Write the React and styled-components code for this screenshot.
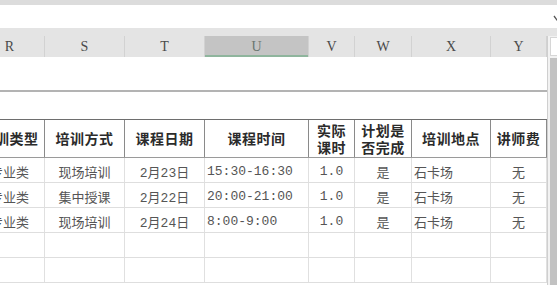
import React from 'react'
import styled, { createGlobalStyle } from 'styled-components'

const cols = '70px 80px 80px 104px 46px 57px 79px 56px'

const letters = ['R', 'S', 'T', 'U', 'V', 'W', 'X', 'Y']

const heads = [
  ['培训类型'],
  ['培训方式'],
  ['课程日期'],
  ['课程时间'],
  ['实际', '课时'],
  ['计划是', '否完成'],
  ['培训地点'],
  ['讲师费'],
]

const rows = [
  ['专业类', '现场培训', '2月23日', '15:30-16:30', '1.0', '是', '石卡场', '无'],
  ['专业类', '集中授课', '2月22日', '20:00-21:00', '1.0', '是', '石卡场', '无'],
  ['专业类', '现场培训', '2月24日', '8:00-9:00', '1.0', '是', '石卡场', '无'],
  ['', '', '', '', '', '', '', ''],
  ['', '', '', '', '', '', '', ''],
]

// columns whose text sits on the left
const leftCols = [3, 6]

const App = () => {
  return (
    <>
      <Global />
      <Window>
        <TopBand />
        <FormulaBar>
          <Chevron viewBox="0 0 8 6">
            <path d="M1 1 L4 5 L7 1" fill="none" stroke="#555" strokeWidth="1.3" />
          </Chevron>
        </FormulaBar>
        <Strip />
        <Main>
          <Sheet>
            <Grid>
              <LetterRow>
                {letters.map((l) => (
                  <Letter key={l} $active={l === 'U'}>{l}</Letter>
                ))}
              </LetterRow>
              <BlankRow $h={35} $freeze />
              <BlankRow $h={27} />
              <HeadRow>
                {heads.map((h, i) => (
                  <HeadCell key={i}>
                    {h.map((line) => (
                      <HeadLine key={line}>{line}</HeadLine>
                    ))}
                  </HeadCell>
                ))}
              </HeadRow>
              {rows.map((r, ri) => (
                <DataRow key={ri}>
                  {r.map((v, ci) => (
                    <DataCell key={ci} $left={leftCols.includes(ci)}>{v}</DataCell>
                  ))}
                </DataRow>
              ))}
            </Grid>
          </Sheet>
          <Scrollbar>
            <ScrollButton />
            <Thumb />
          </Scrollbar>
        </Main>
      </Window>
    </>
  )
}

export default App

const Global = createGlobalStyle`
  html, body {
    margin: 0;
    padding: 0;
    background: #fff;
  }
`

const Window = styled.div`
  width: 557px;
  height: 285px;
  overflow: hidden;
  display: flex;
  flex-direction: column;
  background: #fff;
  font-family: "Noto Sans CJK SC", sans-serif;
`

const TopBand = styled.div`
  height: 5px;
  background: #dcdcdc;
  flex-shrink: 0;
`

const FormulaBar = styled.div`
  height: 23px;
  flex-shrink: 0;
  background: #fff;
  display: flex;
  align-items: center;
  justify-content: flex-end;
`

const Chevron = styled.svg`
  width: 8px;
  height: 6px;
  margin-right: -4px;
  margin-top: 3px;
`

const Strip = styled.div`
  height: 8px;
  flex-shrink: 0;
  background: #e4e4e4;
`

const Main = styled.div`
  flex: 1;
  display: flex;
  min-height: 0;
`

const Sheet = styled.div`
  width: 547px;
  overflow: hidden;
`

const Grid = styled.div`
  margin-left: -25px;
  width: 572px;
`

const Row = styled.div`
  display: grid;
  grid-template-columns: ${cols};
`

const LetterRow = styled(Row)`
  height: 21px;
  background: #e4e4e4;
`

const Letter = styled.div`
  display: flex;
  align-items: center;
  justify-content: center;
  font-family: "Liberation Serif", serif;
  font-size: 14px;
  border-right: 1px solid #d2d2d2;
  background: ${(p) => (p.$active ? '#c4c4c4' : 'transparent')};
  box-shadow: ${(p) => (p.$active ? 'inset 0 -2px 0 #8fb59d' : 'none')};
  color: ${(p) => (p.$active ? '#6a7670' : '#4a4a4a')};
`

const BlankRow = styled.div`
  height: ${(p) => p.$h}px;
  box-sizing: border-box;
  border-bottom: ${(p) => (p.$freeze ? '2px solid #b3b3b3' : 'none')};
`

const HeadRow = styled(Row)`
  height: 39px;
  box-sizing: border-box;
  border-top: 1px solid #6e6e6e;
  border-bottom: 1px solid #9a9a9a;
`

const HeadCell = styled.div`
  display: flex;
  flex-direction: column;
  align-items: center;
  justify-content: center;
  border-right: 1px solid #8a8a8a;
  font-size: 14px;
  font-weight: 700;
  color: #2b2b2b;
  letter-spacing: 0.5px;
`

const HeadLine = styled.span`
  display: block;
  line-height: 17px;
`

const DataRow = styled(Row)`
  height: 25px;
  box-sizing: border-box;
  border-bottom: 1px solid #dedede;
`

const DataCell = styled.div`
  display: flex;
  align-items: center;
  justify-content: ${(p) => (p.$left ? 'flex-start' : 'center')};
  padding-left: ${(p) => (p.$left ? '2px' : '0')};
  padding-top: 2px;
  border-right: 1px solid #e0e0e0;
  font-family: "Liberation Mono", "Noto Sans CJK SC", monospace;
  font-size: 13px;
  color: #555;
  white-space: nowrap;
`

const Scrollbar = styled.div`
  width: 10px;
  display: flex;
  flex-direction: column;
  background: #f2f2f2;
  border-left: 1px solid #cfcfcf;
  box-sizing: border-box;
`

const ScrollButton = styled.div`
  height: 17px;
  margin: 1px 0 2px 2px;
  background: #fff;
  border: 1px solid #d6d6d6;
  border-right: none;
`

const Thumb = styled.div`
  flex: 1;
  margin-left: 2px;
  background: #c2c2c2;
`
